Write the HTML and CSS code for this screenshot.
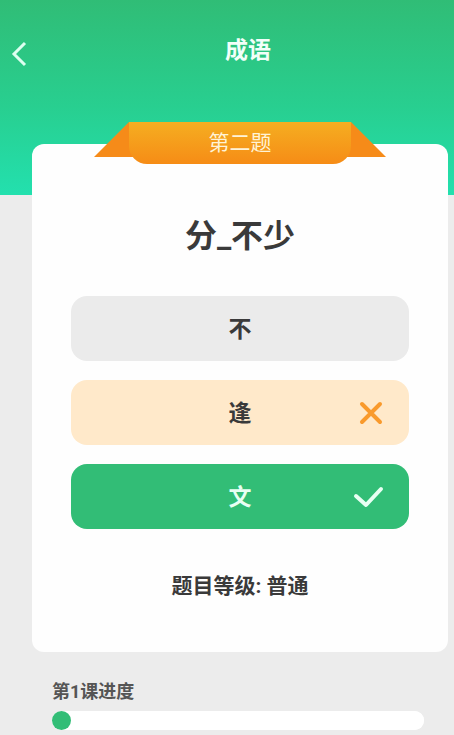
FILE: index.html
```html
<!DOCTYPE html>
<html lang="zh-CN">
<head>
<meta charset="utf-8">
<meta name="viewport" content="width=device-width, initial-scale=1">
<title>成语</title>
<link rel="stylesheet" href="styles.css">
</head>
<body>
<header class="top">
  <div class="bar">
    <button class="back" type="button" aria-label="返回">
      <svg width="16" height="26" viewBox="0 0 16 26" aria-hidden="true"><path d="M14 2 3 13 14 24"/></svg>
    </button>
    <h1 class="title">成语</h1>
  </div>
</header>
<main class="content">
  <section class="card">
    <div class="ribbon">
      <svg class="fold fold-left" width="53" height="35" viewBox="0 0 53 35" aria-hidden="true"><path d="M35 0H53V35H0Z"/></svg>
      <h2 class="ribbon-label">第二题</h2>
      <svg class="fold fold-right" width="53" height="35" viewBox="0 0 53 35" aria-hidden="true"><path d="M0 0H18L53 35H0Z"/></svg>
    </div>
    <p class="question">分_不少</p>
    <div class="options">
      <button class="option" type="button">不</button>
      <button class="option wrong" type="button">逢
        <svg class="mark" width="32" height="32" viewBox="0 0 32 32" aria-hidden="true"><path d="M9 8 27 26M27 8 9 26"/></svg>
      </button>
      <button class="option right" type="button">文
        <svg class="mark" width="32" height="32" viewBox="0 0 32 32" aria-hidden="true"><path d="M3 16 13 25 28 9"/></svg>
      </button>
    </div>
    <p class="level">题目等级: 普通</p>
  </section>
  <section class="lesson">
    <label class="lesson-label" for="lesson-progress">第1课进度</label>
    <progress class="progress" id="lesson-progress" value="1" max="20"></progress>
  </section>
</main>
</body>
</html>
```
FILE: styles.css
```css
* {
  box-sizing: border-box;
}

body {
  margin: 0;
  background: #ececec;
  color: #3a3a3a;
  font-family: Roboto, "Noto Sans CJK SC", sans-serif;
}

h1,
h2,
p {
  margin: 0;
}

button {
  border: 0;
  font-family: inherit;
  cursor: pointer;
}

.top {
  min-height: 195px;
  padding-top: 33px;
  background: linear-gradient(#30bd76, #28cf90 55%, #23e0ae);
}

.bar {
  display: flex;
  align-items: center;
}

.back {
  display: flex;
  align-items: flex-end;
  width: 42px;
  height: 36px;
  padding: 0 0 2px 11px;
  background: none;
}

.back svg {
  fill: none;
  stroke: #dcfff0;
  stroke-width: 3;
}

.title {
  flex: 1;
  color: #f2fff9;
  font-size: 23px;
  line-height: 36px;
  text-align: center;
}

.content {
  margin-top: -51px;
}

.card {
  margin: 0 6px 0 32px;
  padding: 0 39px 50px;
  border-radius: 12px;
  background: #fefefe;
  position: relative;
}

/* The ribbon hangs over the top edge of the card. */
.ribbon {
  display: flex;
  justify-content: center;
  margin: 0 0 26px;
  position: relative;
  top: -22px;
}

.fold {
  flex: none;
  fill: #f68b19;
}

/* The folds run on behind the rounded corners of the label. */
.fold-left {
  margin-right: -18px;
}

.fold-right {
  margin-left: -18px;
}

.ribbon-label {
  width: 222px;
  border-radius: 0 0 18px 18px;
  background: linear-gradient(#f5ae21, #f68c16);
  color: #fff3d6;
  font-size: 21px;
  font-weight: 400;
  line-height: 42px;
  text-align: center;
  position: relative;
  z-index: 1;
}

.question {
  font-size: 32px;
  font-weight: 700;
  line-height: 48px;
  text-align: center;
}

.options {
  display: grid;
  gap: 19px;
  margin-top: 36px;
}

.option {
  display: flex;
  align-items: center;
  justify-content: center;
  height: 65px;
  padding: 2px 0 0;
  border-radius: 16px;
  background: #ebebeb;
  color: #3a3a3a;
  font-size: 23px;
  font-weight: 700;
  line-height: 36px;
  position: relative;
}

.wrong {
  background: #ffe9ca;
}

.right {
  background: #32bd76;
  color: #e8fff3;
}

.mark {
  position: absolute;
  top: 16px;
  right: 24px;
  fill: none;
  stroke: #e8fff3;
  stroke-width: 4;
  stroke-linecap: round;
  stroke-linejoin: round;
}

.wrong .mark {
  stroke: #f99a2c;
}

.level {
  margin-top: 41px;
  font-size: 21px;
  font-weight: 700;
  line-height: 32px;
  text-align: center;
}

.lesson {
  display: grid;
  gap: 5px;
  margin: 26px 30px 5px 52px;
}

.lesson-label {
  color: #555;
  font-size: 18px;
  font-weight: 700;
  line-height: 28px;
}

.progress {
  width: 100%;
  height: 19px;
  border: 0;
  border-radius: 10px;
  background: #fff;
  appearance: none;
}

.progress::-webkit-progress-bar {
  border-radius: 10px;
  background: #fff;
}

.progress::-webkit-progress-value {
  border-radius: 10px;
  background: #32bd76;
}
```
